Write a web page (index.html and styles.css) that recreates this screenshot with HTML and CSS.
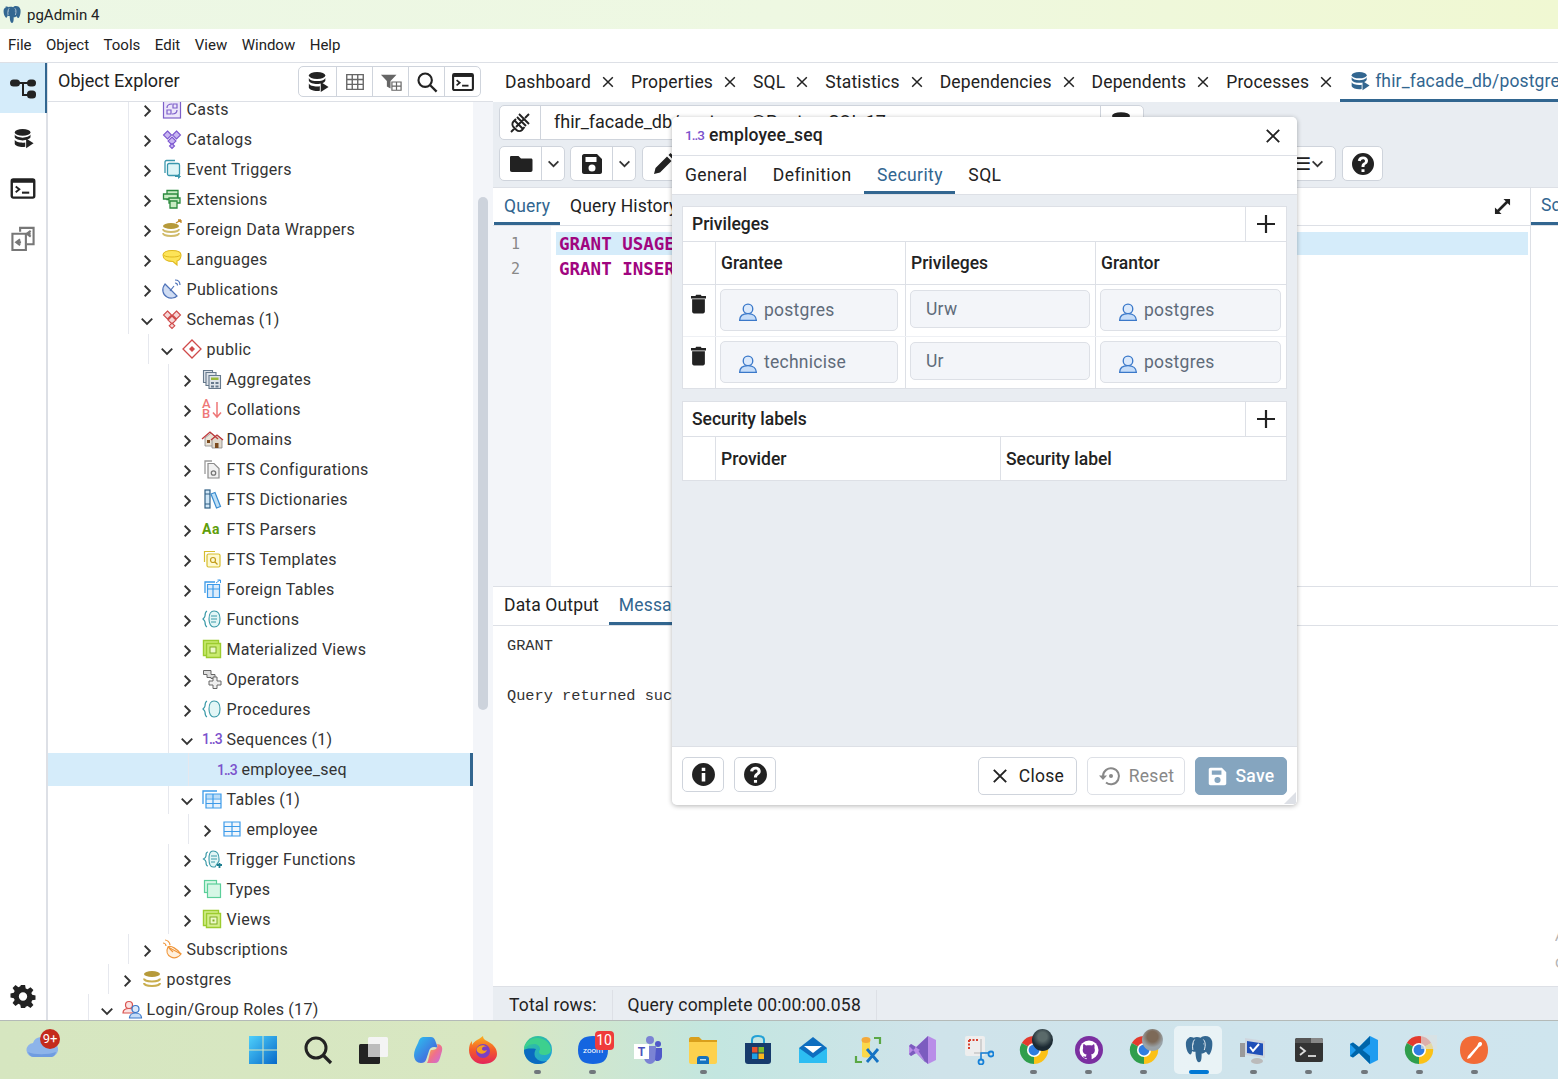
FILE: index.html
```html
<!DOCTYPE html>
<html lang="en">
<head>
  <meta charset="UTF-8">
  <title>pgAdmin 4</title>
  <link rel="stylesheet" href="styles.css">
</head>
<body>

<svg class="defs" width="0" height="0">
  <defs>
    <symbol id="i-close" viewBox="0 0 16 16"><path d="M2.500 2.500l11 11M13.500 2.500l-11 11" fill="none" stroke="currentColor" stroke-width="1.700"/></symbol>
    <symbol id="i-right" viewBox="0 0 12 12"><path d="M4 1.500L8.500 6 4 10.500" fill="none" stroke="#333" stroke-width="1.600"/></symbol>
    <symbol id="i-down" viewBox="0 0 12 12"><path d="M1.500 4L6 8.500 10.500 4" fill="none" stroke="#333" stroke-width="1.600"/></symbol>
    <symbol id="i-dbplay" viewBox="0 0 24 24"><g fill="currentColor"><ellipse cx="11" cy="5" rx="9" ry="3.800"/><path d="M2 7.500c1 2.300 5 3.500 9 3.500s8-1.200 9-3.500v3.200c-1 2.300-5 3.500-9 3.500s-8-1.200-9-3.500z"/><path d="M2 13.500c1 2.300 5 3.300 9 3.300 1 0 2 0 3-.2v4.900c-1 .2-2 .3-3 .3-4 0-8-1.300-9-3.500z"/><path d="M15 12l8.500 5.500L15 23z"/></g></symbol>
    <symbol id="i-grid" viewBox="0 0 24 24"><path d="M3 4h18v16H3zM3 9.300h18M3 14.600h18M9 4v16M15 4v16" fill="none" stroke="currentColor" stroke-width="1.500"/></symbol>
    <symbol id="i-filter" viewBox="0 0 24 24"><path d="M1 4h17l-6.500 7v8l-4-2v-6z" fill="currentColor"/><path d="M13 12h10v9H13zM13 16.500h10M18 12v9" fill="#fff" stroke="currentColor" stroke-width="1.300"/></symbol>
    <symbol id="i-search" viewBox="0 0 24 24"><circle cx="10" cy="10" r="7.300" fill="none" stroke="currentColor" stroke-width="2.300"/><path d="M15.500 15.500l7 7" stroke="currentColor" stroke-width="2.500"/></symbol>
    <symbol id="i-term" viewBox="0 0 24 24"><rect x="1.200" y="3.200" width="21.600" height="17.600" rx="1.500" fill="none" stroke="currentColor" stroke-width="2.300"/><rect x="1" y="3" width="22" height="3.500" fill="currentColor"/><path d="M5 10l3.500 2.800L5 15.600" fill="none" stroke="currentColor" stroke-width="1.800"/><path d="M11 16h7" stroke="currentColor" stroke-width="2"/></symbol>
    <symbol id="i-tree" viewBox="0 0 26 24"><g fill="currentColor"><rect x="0" y="3" width="10" height="7" rx="3.500"/><rect x="17" y="3" width="9" height="7" rx="3.500"/><rect x="17" y="14" width="9" height="8" rx="3.500"/><path d="M9 5.500h9v2h-4v10h4v2h-6v-12H9z"/></g></symbol>
    <symbol id="i-diff" viewBox="0 0 26 26"><g fill="none" stroke="currentColor" stroke-width="2.200"><path d="M10 6V2h14v17h-7"/><path d="M2 8h14v17H2z"/><path d="M21 5l-4 3 4 3M17 8h4M10 14l-4 3 4 3M6 17h5"/></g></symbol>
    <symbol id="i-gear" viewBox="0 0 24 24"><path fill="currentColor" fill-rule="evenodd" d="M10 1h4l.6 3.200 1.800.8L19.200 3l2.800 2.800-2 2.800.8 1.800 3.200.6v4l-3.200.6-.8 1.800 2 2.800-2.800 2.800-2.800-2-1.800.8L14 23h-4l-.6-3.200-1.800-.8-2.800 2L2 18.200l2-2.800-.8-1.800L0 13v-4l3.200-.6L4 6.600 2 3.800 4.800 1l2.800 2 1.800-.8zM12 8a4 4 0 1 0 0 8 4 4 0 0 0 0-8z"/></symbol>
    <symbol id="i-folder" viewBox="0 0 24 24"><path fill="currentColor" d="M2 4h7.500l2.500 2.500h10c1 0 1.500.6 1.500 1.500v10c0 1-.6 2-2 2H3c-1.400 0-2-1-2-2V5.500C1 4.600 1.400 4 2 4z"/></symbol>
    <symbol id="i-save" viewBox="0 0 24 24"><path fill="currentColor" fill-rule="evenodd" d="M4 2h13l5 5v13c0 1-1 2-2 2H4c-1 0-2-1-2-2V4c0-1 1-2 2-2zm1.500 3v5h11V5zM12 12.500a3.500 3.500 0 1 0 0 7 3.500 3.500 0 0 0 0-7z"/></symbol>
    <symbol id="i-pencil" viewBox="0 0 24 24"><path fill="currentColor" d="M2 22l1.500-6L15 4.500l4.500 4.500L8 20.500zM16.500 3l2-2L23 5.500l-2 2z"/></symbol>
    <symbol id="i-help" viewBox="0 0 24 24"><path fill="currentColor" fill-rule="evenodd" d="M12 1a11 11 0 1 0 0 22 11 11 0 0 0 0-22zm-1.500 16.200h3V20h-3zM12 4.500c3 0 5 1.700 5 4.300 0 2.100-1.300 3-2.500 3.800-.8.600-1 1-1 2.400h-3c0-2.300.7-3.300 2-4.200 1-.7 1.500-1.100 1.500-1.900 0-1-.8-1.600-2-1.600s-2 .7-2.200 1.900l-3-.4C7.200 6 9.200 4.500 12 4.500z"/></symbol>
    <symbol id="i-info" viewBox="0 0 24 24"><path fill="currentColor" fill-rule="evenodd" d="M12 1a11 11 0 1 0 0 22 11 11 0 0 0 0-22zm-1.700 4.500h3.400v3.200h-3.400zm0 5h3.400v8.300h-3.400z"/></symbol>
    <symbol id="i-trash" viewBox="0 0 16 20"><path fill="currentColor" d="M5.500 0h5l.8 1.500H16V4H0V1.500h4.700zM1.200 5h13.600v13c0 1.200-.8 2-2 2H3.200c-1.200 0-2-.8-2-2z"/></symbol>
    <symbol id="i-plus" viewBox="0 0 20 20"><path d="M10 1v18M1 10h18" stroke="currentColor" stroke-width="2.200"/></symbol>
    <symbol id="i-user" viewBox="0 0 18 18"><circle cx="9" cy="6.200" r="4.300" fill="#dbe9fb" stroke="#3a78c9" stroke-width="1.200"/><path d="M1.500 16.500c0-3.800 3-6 7.500-6s7.500 2.200 7.500 6z" fill="#c5dcf8" stroke="#3a78c9" stroke-width="1.200"/></symbol>
    <symbol id="i-expand" viewBox="0 0 18 18"><path fill="currentColor" d="M10 1h7v7l-2.500-2.500-9 9L8 17H1v-7l2.500 2.500 9-9z"/></symbol>
    <symbol id="i-plug" viewBox="0 0 24 24"><path d="M3 21l4-4M21 3l-4 4M9 6l9 9M6 9l9 9M8 8l-2.500 2.500c-1.500 1.500-1.500 4 0 5.500l3 3c1.500 1.500 4 1.500 5.500 0L16.500 16M16 8l-8 8M11 3l10 10" fill="none" stroke="currentColor" stroke-width="1.900"/></symbol>
    <symbol id="i-reset" viewBox="0 0 24 24"><path d="M5 12a8 8 0 1 1 3 6.500" fill="none" stroke="currentColor" stroke-width="2"/><path d="M1 11.500h8L5 16z" fill="currentColor"/><circle cx="13" cy="12" r="2" fill="currentColor"/></symbol>
    <symbol id="i-chrome" viewBox="0 0 32 32"><path fill="#e33b2e" d="M16 16L3 8.500A15 15 0 0 1 29 8.500z"/><path fill="#fbc116" d="M16 16l13-7.500A15 15 0 0 1 16 31z"/><path fill="#2f9e4c" d="M16 16v15A15 15 0 0 1 3 8.500z"/><circle cx="16" cy="16" r="7.500" fill="#fff"/><circle cx="16" cy="16" r="5.800" fill="#2f7de1"/></symbol>
    <symbol id="i-pg" viewBox="0 0 32 32"><path fill="#336791" d="M6 2C3 2 1 5 1 9c0 5 2 11 5 12 1 0 2-2 2-4 1 1 3 1 4 1 0 5 1 12 4 12 3 0 3-5 3-10 2 0 3-.5 5-2 2 3 3 4 4 3 2-2 4-9 3-15-1-4-4-6-8-6-2 0-4 1-5 2-3-1-6-1-8 0-1-.5-2-1-6-1z"/><path d="M11 4c-2 2-3 7-2 12M21 4c2 2 3 6 1 12M9 9h1M21 9h1" fill="none" stroke="#fff" stroke-width="1"/></symbol>
  </defs>
</svg>

<header class="titlebar">
  <svg class="title-logo"><use href="#i-pg"/></svg>
  <span>pgAdmin 4</span>
</header>

<nav class="menubar">
  <span>File</span><span>Object</span><span>Tools</span><span>Edit</span><span>View</span><span>Window</span><span>Help</span>
</nav>

<div class="app">
  <aside class="sidebar">
    <div class="side-btn active"><svg><use href="#i-tree"/></svg></div>
    <div class="side-btn db"><svg><use href="#i-dbplay"/></svg></div>
    <div class="side-btn"><svg><use href="#i-term"/></svg></div>
    <div class="side-btn muted"><svg><use href="#i-diff"/></svg></div>
    <div class="side-btn gear"><svg><use href="#i-gear"/></svg></div>
  </aside>

  <section class="explorer">
    <div class="explorer-head">
      <span class="explorer-title">Object Explorer</span>
      <div class="btn-group">
        <span><svg><use href="#i-dbplay"/></svg></span>
        <span class="dim"><svg><use href="#i-grid"/></svg></span>
        <span class="dim"><svg><use href="#i-filter"/></svg></span>
        <span><svg><use href="#i-search"/></svg></span>
        <span><svg><use href="#i-term"/></svg></span>
      </div>
    </div>
    <div class="tree-wrap">
      <div class="tree">
        <div class="row l2"><svg class="chev"><use href="#i-right"/></svg><svg class="ico" viewBox="0 0 20 20"><rect x="1.500" y="0" width="17" height="19" fill="#ece6fa" stroke="#7d5fc9" stroke-width="1.200"/><path d="M5 15v-4h4v4zM11 9V5h4v4zM5 9c0-3 2-4 5-4M15 11c0 3-2 4-5 4" fill="none" stroke="#7d5fc9" stroke-width="1.200"/></svg><span>Casts</span></div>
        <div class="row l2"><svg class="chev"><use href="#i-right"/></svg><svg class="ico" viewBox="0 0 20 20"><g fill="#c8b6f2" stroke="#7c57cf" stroke-width="1.100"><path d="M5.500 2l4 4-4 4-4-4zM14.500 2l4 4-4 4-4-4zM10 8l4 4-4 4-4-4z"/><path d="M10 14.500l2.500 2.500-2.500 2.500L7.500 17z"/></g></svg><span>Catalogs</span></div>
        <div class="row l2"><svg class="chev"><use href="#i-right"/></svg><svg class="ico" viewBox="0 0 20 20"><path d="M3 14V3a1.500 1.500 0 0 1 1.500-1.500H13" fill="none" stroke="#3a97ad" stroke-width="1.300"/><rect x="5.500" y="4.500" width="12" height="12" rx="1.500" fill="#def5f7" stroke="#3a97ad" stroke-width="1.300"/><path d="M13 17.500h5M16 15.500l2.500 2-2.500 2" fill="#3a97ad" stroke="#3a97ad"/></svg><span>Event Triggers</span></div>
        <div class="row l2"><svg class="chev"><use href="#i-right"/></svg><svg class="ico" viewBox="0 0 20 20"><g fill="#c9ecc4" stroke="#2b8a3e" stroke-width="1.300"><path d="M5 1.500h11v9H5z"/><path d="M1.500 5h14v5h-14z"/><path d="M7 9h11v5H7z"/><path d="M8 12h7v7H8z"/></g></svg><span>Extensions</span></div>
        <div class="row l2"><svg class="chev"><use href="#i-right"/></svg><svg class="ico" viewBox="0 0 20 20"><ellipse cx="9" cy="7" rx="8" ry="3" fill="#b69a3a"/><path d="M1 10c0 1.700 3.600 3 8 3s8-1.300 8-3M1 14c0 1.700 3.600 3 8 3s8-1.300 8-3" fill="none" stroke="#d0bb6a" stroke-width="1.800"/><path d="M14 4l5-3M19 1h-3M19 1v3" stroke="#c28b2c" stroke-width="1.300" fill="none"/></svg><span>Foreign Data Wrappers</span></div>
        <div class="row l2"><svg class="chev"><use href="#i-right"/></svg><svg class="ico" viewBox="0 0 20 20"><path d="M1 6c0-3 4-4.500 9-4.500S19 3 19 6c0 3-1 5-4 6v4l-4-3.500C5 12.500 1 10 1 6z" fill="#fde458" stroke="#e0b91f" stroke-width="1.100"/><path d="M2 6.500c2 2 14 2 16 0" fill="none" stroke="#e0b91f"/></svg><span>Languages</span></div>
        <div class="row l2"><svg class="chev"><use href="#i-right"/></svg><svg class="ico" viewBox="0 0 20 20"><path d="M3 5C-1 10 1 16 5 18c3.500 2 8 1 10-1z" fill="#cfdcf3" stroke="#4e72b8" stroke-width="1.200"/><path d="M8 12l4-5M13 1c3 0 5 2 5 5M13 4c1.500 0 2.500 1 2.500 2.500" fill="none" stroke="#4e72b8" stroke-width="1.200"/></svg><span>Publications</span></div>
        <div class="row l2"><svg class="chev"><use href="#i-down"/></svg><svg class="ico" viewBox="0 0 20 20"><g fill="#f6d5d5" stroke="#cf4a4a" stroke-width="1.100"><path d="M5.500 2l4 4-4 4-4-4zM14.500 2l4 4-4 4-4-4zM10 7l4 4-4 4-4-4z"/><path d="M10 14l2.800 2.800-2.800 2.700-2.800-2.700z"/></g></svg><span>Schemas<span class="count">(1)</span></span></div>
        <div class="row l3"><svg class="chev"><use href="#i-down"/></svg><svg class="ico" viewBox="0 0 20 20"><path d="M10 1l9 9-9 9-9-9z" fill="#fff" stroke="#cf4a4a" stroke-width="1.300"/><path d="M10 7l3 3-3 3-3-3z" fill="#cf4a4a"/></svg><span>public</span></div>
        <div class="row l4"><svg class="chev"><use href="#i-right"/></svg><svg class="ico" viewBox="0 0 20 20"><g fill="#dfe4ea" stroke="#66798c" stroke-width="1.100"><path d="M1.500 1.500h9v12h-9z"/><path d="M4 3.500h10v13H4z"/><path d="M7 6.500h11.500v13H7z"/></g><path d="M9 8.500h7.500v2.500H9z" fill="#9ab93c"/><path d="M9 13h3v2H9zM13.500 13h3v2h-3zM9 16.500h3v2H9zM13.500 16.500h3v2h-3z" fill="#66798c"/></svg><span>Aggregates</span></div>
        <div class="row l4"><svg class="chev"><use href="#i-right"/></svg><svg class="ico" viewBox="0 0 20 20"><text x="0" y="9" class="svg-ab">A</text><text x="0" y="19" class="svg-ab">B</text><path d="M15 3v15M11 13.500l4 4.500 4-4.500" fill="none" stroke="#ee7777" stroke-width="1.500"/></svg><span>Collations</span></div>
        <div class="row l4"><svg class="chev"><use href="#i-right"/></svg><svg class="ico" viewBox="0 0 20 20"><path d="M3 9l6-5 6 5v8H3z" fill="#e9e2d6" stroke="#888" stroke-width=".8"/><path d="M10 10l5-4 5 4v9H10z" fill="#dfd8cc" stroke="#888" stroke-width=".8"/><path d="M0 10l8-7 8 7M9 11l6-5 6 5" fill="none" stroke="#c0393b" stroke-width="1.300"/><path d="M13 14h3.500v5H13zM5 11h3v3H5z" fill="#7b4a1e"/></svg><span>Domains</span></div>
        <div class="row l4"><svg class="chev"><use href="#i-right"/></svg><svg class="ico" viewBox="0 0 20 20"><path d="M3 15V2h7" fill="none" stroke="#9a9a9a" stroke-width="1.300"/><path d="M6 4.500h6l5 5V19H6z" fill="#f1f1f1" stroke="#8c8c8c" stroke-width="1.200"/><circle cx="11.500" cy="14" r="2.200" fill="none" stroke="#777" stroke-width="1.300"/></svg><span>FTS Configurations</span></div>
        <div class="row l4"><svg class="chev"><use href="#i-right"/></svg><svg class="ico" viewBox="0 0 20 20"><rect x="3" y="1" width="5" height="18" fill="#cfe6f6" stroke="#2f5f85" stroke-width="1.200"/><path d="M3 5h5M3 15h5" stroke="#2f5f85"/><path d="M9 5l4-1.500 5.500 14-4 1.500z" fill="#bfe0f7" stroke="#3b8dd0" stroke-width="1.200"/></svg><span>FTS Dictionaries</span></div>
        <div class="row l4"><svg class="chev"><use href="#i-right"/></svg><span class="ico-text aa">Aa</span><span>FTS Parsers</span></div>
        <div class="row l4"><svg class="chev"><use href="#i-right"/></svg><svg class="ico" viewBox="0 0 20 20"><path d="M2.500 13V2.500H13" fill="none" stroke="#d6bd2e" stroke-width="1.200"/><rect x="5" y="5" width="13" height="13" rx="1.500" fill="#fdf9d0" stroke="#d6bd2e" stroke-width="1.200"/><circle cx="11" cy="11" r="2.500" fill="none" stroke="#c29a1a" stroke-width="1.200"/><path d="M13 13l2.500 2.500" stroke="#c29a1a" stroke-width="1.200"/></svg><span>FTS Templates</span></div>
        <div class="row l4"><svg class="chev"><use href="#i-right"/></svg><svg class="ico" viewBox="0 0 20 20"><path d="M3 14V3h10" fill="none" stroke="#3d9be9" stroke-width="1.300"/><path d="M5.500 5.500h12v13h-12zM5.500 10h12M11 5.500v13" fill="#dcecfb" stroke="#3d9be9" stroke-width="1.200"/><path d="M14 4l4-3M18.500 1h-3M18.500 1v3" fill="none" stroke="#3d9be9"/></svg><span>Foreign Tables</span></div>
        <div class="row l4"><svg class="chev"><use href="#i-right"/></svg><svg class="ico" viewBox="0 0 20 20"><path d="M5 2C3 3 3 5 3 7c0 1-1 2-2 3 1 1 2 2 2 3 0 2 0 4 2 5" fill="none" stroke="#3b9aa8" stroke-width="1.200"/><path d="M12 2c4 0 6 3 6 8s-2 8-6 8c-3 0-5-3-5-8s2-8 5-8z" fill="#e2f6f6" stroke="#3b9aa8" stroke-width="1.100"/><path d="M9 7h6M9 10h6M9 13h5" stroke="#3b9aa8"/></svg><span>Functions</span></div>
        <div class="row l4"><svg class="chev"><use href="#i-right"/></svg><svg class="ico" viewBox="0 0 20 20"><g fill="#c8ea6f" stroke="#9ccc2f" stroke-width="1.400"><path d="M1.500 1.500h15v15h-15z"/><path d="M4.500 4.500h14v14h-14z"/></g><rect x="8" y="8" width="6" height="6" fill="#ecf9c9" stroke="#7fab20"/></svg><span>Materialized Views</span></div>
        <div class="row l4"><svg class="chev"><use href="#i-right"/></svg><svg class="ico" viewBox="0 0 20 20"><path d="M5 1.500h4v4h4v4H9v-1H5V5.500H1.500v-4z" fill="#ddd" stroke="#666" stroke-width="1"/><path d="M11 8h4v4h4v4h-4v3.500h-4V16H7v-4h4z" fill="#eee" stroke="#666" stroke-width="1"/></svg><span>Operators</span></div>
        <div class="row l4"><svg class="chev"><use href="#i-right"/></svg><svg class="ico" viewBox="0 0 20 20"><path d="M5 2C3 3 3 5 3 7c0 1-1 2-2 3 1 1 2 2 2 3 0 2 0 4 2 5" fill="none" stroke="#3b9aa8" stroke-width="1.200"/><path d="M12 2c4 0 6 3 6 8s-2 8-6 8c-3 0-5-3-5-8s2-8 5-8z" fill="#e2f6f6" stroke="#3b9aa8" stroke-width="1.100"/></svg><span>Procedures</span></div>
        <div class="row l4"><svg class="chev"><use href="#i-down"/></svg><span class="ico-text seq">1..3</span><span>Sequences<span class="count">(1)</span></span></div>
        <div class="row l5 leaf selected"><span class="ico-text seq">1..3</span><span>employee_seq</span></div>
        <div class="row l4"><svg class="chev"><use href="#i-down"/></svg><svg class="ico" viewBox="0 0 20 20"><path d="M1 15V2h14" fill="none" stroke="#3d9be9" stroke-width="1.300"/><path d="M4 5h15v14H4zM4 10h15M4 14.500h15M11 5v14" fill="#e6f2fc" stroke="#3d9be9" stroke-width="1.200"/><path d="M4 5h15v4H4z" fill="#3d9be9" opacity=".25"/></svg><span>Tables<span class="count">(1)</span></span></div>
        <div class="row l5"><svg class="chev"><use href="#i-right"/></svg><svg class="ico" viewBox="0 0 20 20"><path d="M2 3h16v14H2zM2 7.500h16M2 12.500h16M10 3v14" fill="#f0f6fc" stroke="#3d9be9" stroke-width="1.200"/></svg><span>employee</span></div>
        <div class="row l4"><svg class="chev"><use href="#i-right"/></svg><svg class="ico" viewBox="0 0 20 20"><path d="M6 3C4 3 4 5 4 7c0 1-1 2-2.500 3C3 11 4 12 4 13c0 2 0 4 2 4" fill="none" stroke="#3b9aa8" stroke-width="1.200"/><path d="M11 2c4 0 6 3 6 8v2l-4 6h-2c-3 0-4-3-4-8s1-8 4-8z" fill="#e2f6f6" stroke="#3b9aa8" stroke-width="1.100"/><path d="M9 7h6M9 10h6M9 13h4" stroke="#3b9aa8"/><path d="M15 16h5M17.500 14v5" stroke="#1f7f91" stroke-width="1.800"/></svg><span>Trigger Functions</span></div>
        <div class="row l4"><svg class="chev"><use href="#i-right"/></svg><svg class="ico" viewBox="0 0 20 20"><rect x="2.500" y="1.500" width="12" height="12" fill="#d6f7e6" stroke="#5ccf9a" stroke-width="1.200"/><rect x="5.500" y="5" width="13" height="13.500" fill="#d6f7e6" stroke="#5ccf9a" stroke-width="1.200"/></svg><span>Types</span></div>
        <div class="row l4"><svg class="chev"><use href="#i-right"/></svg><svg class="ico" viewBox="0 0 20 20"><g fill="#d3ee8c" stroke="#9ccc2f" stroke-width="1.400"><path d="M1.500 1.500h15v15h-15z"/><path d="M4.500 4.500h14v14h-14z"/></g><rect x="8" y="8" width="7" height="7" fill="#ecf9c9" stroke="#7fab20"/><rect x="10.500" y="10.500" width="2" height="2" fill="#7fab20"/></svg><span>Views</span></div>
        <div class="row l2"><svg class="chev"><use href="#i-right"/></svg><svg class="ico" viewBox="0 0 20 20"><path d="M6 8c-2 4-1 8 3 10 4 2 8 0 10-3z" fill="#fff0dd" stroke="#f0963a" stroke-width="1.200"/><path d="M6 8c3-2 9 2 13 7M11 13l-4-4M1 4c1 0 3 1 3 3M3 1c2 0 5 2 5 5" fill="none" stroke="#f0963a" stroke-width="1.200"/></svg><span>Subscriptions</span></div>
        <div class="row l1"><svg class="chev"><use href="#i-right"/></svg><svg class="ico" viewBox="0 0 20 20"><ellipse cx="10" cy="5" rx="8" ry="3" fill="#b69a3a"/><path d="M2 9.500c0 1.700 3.600 3 8 3s8-1.300 8-3M2 14c0 1.700 3.600 3 8 3s8-1.300 8-3" fill="none" stroke="#c9ae4f" stroke-width="2"/></svg><span>postgres</span></div>
        <div class="row l0"><svg class="chev"><use href="#i-down"/></svg><svg class="ico" viewBox="0 0 20 20"><circle cx="7" cy="6" r="3.500" fill="#fbe3e3" stroke="#d9534f" stroke-width="1.200"/><path d="M1 14c0-3 2.500-4.500 6-4.500s6 1.500 6 4.500z" fill="#fbe3e3" stroke="#d9534f" stroke-width="1.200"/><circle cx="13.500" cy="10" r="3.500" fill="#dbe9fb" stroke="#3a78c9" stroke-width="1.200"/><path d="M7.500 19c0-3 2.500-5 6-5s6 2 6 5z" fill="#c5dcf8" stroke="#3a78c9" stroke-width="1.200"/></svg><span>Login/Group Roles<span class="count">(17)</span></span></div>
      </div>
      <div class="tree-scroll"><div class="thumb"></div></div>
    </div>
  </section>

  <main class="main">
    <div class="tabs">
      <span class="tab">Dashboard<svg><use href="#i-close"/></svg></span>
      <span class="tab">Properties<svg><use href="#i-close"/></svg></span>
      <span class="tab">SQL<svg><use href="#i-close"/></svg></span>
      <span class="tab">Statistics<svg><use href="#i-close"/></svg></span>
      <span class="tab">Dependencies<svg><use href="#i-close"/></svg></span>
      <span class="tab">Dependents<svg><use href="#i-close"/></svg></span>
      <span class="tab">Processes<svg><use href="#i-close"/></svg></span>
      <span class="tab active"><svg class="tab-db"><use href="#i-dbplay"/></svg>fhir_facade_db/postgres@PostgreSQL 17</span>
    </div>

    <div class="connbar">
      <div class="conn-box">
        <span class="conn-plug"><svg><use href="#i-plug"/></svg></span>
        <span class="conn-name">fhir_facade_db/postgres@PostgreSQL 17</span>
        <span class="conn-db"><svg><use href="#i-dbplay"/></svg></span>
      </div>
    </div>

    <div class="toolbar">
      <div class="tb-group"><span class="tb-btn"><svg><use href="#i-folder"/></svg></span><span class="tb-arrow"><svg><use href="#i-down"/></svg></span></div>
      <div class="tb-group"><span class="tb-btn"><svg><use href="#i-save"/></svg></span><span class="tb-arrow"><svg><use href="#i-down"/></svg></span></div>
      <div class="tb-group tb-wide"><span class="tb-btn"><svg><use href="#i-pencil"/></svg></span><span class="tb-lines">&#9776;<svg><use href="#i-down"/></svg></span></div>
      <div class="tb-group tb-last"><span class="tb-btn"><svg><use href="#i-help"/></svg></span></div>
    </div>

    <div class="editor-area">
      <div class="query-pane">
        <div class="subtabs">
          <span class="subtab active">Query</span>
          <span class="subtab">Query History</span>
          <svg class="expand"><use href="#i-expand"/></svg>
        </div>
        <div class="editor">
          <div class="gutter"><div>1</div><div>2</div></div>
          <div class="code">
            <div class="code-line current"><b>GRANT USAGE</b></div>
            <div class="code-line"><b>GRANT INSERT</b></div>
          </div>
        </div>
      </div>
      <div class="side-pane"><span class="side-tab">Scratch Pad</span></div>
    </div>

    <div class="output">
      <div class="subtabs">
        <span class="subtab">Data Output</span>
        <span class="subtab active">Messages</span>
      </div>
      <pre class="messages">GRANT

Query returned successfully in 58 msec.</pre>
      <div class="watermark">Activate Windows<br>Go to Settings</div>
    </div>

    <div class="statusbar">
      <span>Total rows:</span>
      <span>Query complete 00:00:00.058</span>
    </div>
  </main>
</div>

<div class="dialog">
  <div class="dlg-title">
    <span class="ico-text seq small">1..3</span>
    <span class="dlg-name">employee_seq</span>
    <svg class="dlg-x"><use href="#i-close"/></svg>
  </div>
  <div class="dlg-tabs">
    <span>General</span><span>Definition</span><span class="current">Security</span><span>SQL</span>
  </div>
  <div class="dlg-body">
    <div class="panel">
      <div class="panel-head"><span>Privileges</span><span class="add"><svg><use href="#i-plus"/></svg></span></div>
      <div class="grid-row heads priv-cols"><div></div><div>Grantee</div><div>Privileges</div><div>Grantor</div></div>
      <div class="grid-row priv-cols">
        <div class="del"><svg><use href="#i-trash"/></svg></div>
        <div><div class="field"><svg><use href="#i-user"/></svg>postgres</div></div>
        <div><div class="field plain">Urw</div></div>
        <div><div class="field"><svg><use href="#i-user"/></svg>postgres</div></div>
      </div>
      <div class="grid-row priv-cols">
        <div class="del"><svg><use href="#i-trash"/></svg></div>
        <div><div class="field"><svg><use href="#i-user"/></svg>technicise</div></div>
        <div><div class="field plain">Ur</div></div>
        <div><div class="field"><svg><use href="#i-user"/></svg>postgres</div></div>
      </div>
    </div>
    <div class="panel">
      <div class="panel-head"><span>Security labels</span><span class="add"><svg><use href="#i-plus"/></svg></span></div>
      <div class="grid-row heads label-cols"><div></div><div>Provider</div><div>Security label</div></div>
    </div>
  </div>
  <div class="dlg-foot">
    <span class="foot-icon"><svg><use href="#i-info"/></svg></span>
    <span class="foot-icon"><svg><use href="#i-help"/></svg></span>
    <span class="foot-space"></span>
    <span class="foot-btn close"><svg><use href="#i-close"/></svg>Close</span>
    <span class="foot-btn disabled"><svg><use href="#i-reset"/></svg>Reset</span>
    <span class="foot-btn save"><svg><use href="#i-save"/></svg>Save</span>
  </div>
  <div class="grip"></div>
</div>

<footer class="taskbar">
  <div class="weather">
    <svg viewBox="0 0 32 22" width="32" height="22"><path d="M8 21a7 7 0 0 1-1-14 9 9 0 0 1 16-2 7 7 0 0 1 2 16z" fill="#8db4ea"/><path d="M2 16c6 3 20 3 28 0-1 4-3 5-5 5H8c-3 0-5-2-6-5z" fill="#6f9ce0"/></svg>
    <span class="badge red-round">9+</span>
  </div>
  <div class="apps">
    <span class="app-icon"><svg viewBox="0 0 30 30"><defs><linearGradient id="win" x1="0" y1="0" x2="1" y2="1"><stop offset="0" stop-color="#4fd0fb"/><stop offset="1" stop-color="#0769c9"/></linearGradient></defs><path fill="url(#win)" d="M1 1h13.500v13.500H1zM15.500 1H29v13.500H15.500zM1 15.500h13.500V29H1zM15.500 15.500H29V29H15.500z"/></svg></span>
    <span class="app-icon"><svg viewBox="0 0 30 30"><circle cx="13" cy="13" r="10" fill="none" stroke="#222" stroke-width="3"/><path d="M20 20l8 8" stroke="#222" stroke-width="3.200"/></svg></span>
    <span class="app-icon"><svg viewBox="0 0 30 30"><rect x="10" y="2" width="20" height="20" rx="1.500" fill="#f4f4f4"/><rect x="1" y="9" width="21" height="20" rx="1.500" fill="#222"/><rect x="10" y="9" width="12" height="13" fill="#bdbdbd"/></svg></span>
    <span class="app-icon"><svg viewBox="0 0 30 30"><defs><linearGradient id="cop1" x1="0" y1="0" x2="1" y2="1"><stop offset="0" stop-color="#2cc6f0"/><stop offset=".6" stop-color="#3f7be0"/><stop offset="1" stop-color="#7d4de0"/></linearGradient><linearGradient id="cop2" x1="0" y1="0" x2="1" y2="1"><stop offset="0" stop-color="#f7c531"/><stop offset=".5" stop-color="#f0708a"/><stop offset="1" stop-color="#c46ce8"/></linearGradient></defs><path fill="url(#cop1)" d="M10 2h8c2 0 3 1 4 3l3 8c-4-2-8-1-9 3l-3 9c-1 2-2 3-5 3-4 0-7-3-7-8 0-4 2-8 4-12 1-4 3-6 5-6z"/><path fill="url(#cop2)" d="M14 28h8c3 0 4-2 5-5l2-7c1-4-1-7-5-7 2 5-3 6-6 6-2 3-2 10-4 13z"/></svg></span>
    <span class="app-icon"><svg viewBox="0 0 30 30"><defs><linearGradient id="fox" x1="0" y1="0" x2="0" y2="1"><stop offset="0" stop-color="#fbb11e"/><stop offset=".5" stop-color="#f45b2a"/><stop offset="1" stop-color="#e3245c"/></linearGradient></defs><path fill="url(#fox)" d="M15 29C7 29 1 23 1 15c0-4 1-7 3-9v4c1-2 3-4 5-5 3-1 4-3 6-4 0 3 2 4 4 5 6 3 10 7 10 13 0 6-6 10-14 10z"/><circle cx="15" cy="16" r="7" fill="#7c3fc4"/><path d="M9 13c2-3 7-4 10-1-3-1-5 0-5 2 0 2 3 2 5 1-1 3-5 5-8 3-2-1-3-3-2-5z" fill="#f7a01e"/></svg></span>
    <span class="app-icon running"><svg viewBox="0 0 30 30"><defs><linearGradient id="edge" x1="0" y1="0" x2="1" y2="1"><stop offset="0" stop-color="#37c98c"/><stop offset="1" stop-color="#1b9de2"/></linearGradient></defs><circle cx="15" cy="15" r="14" fill="url(#edge)"/><path d="M1 15C1 8 7 3 14 3c8 0 14 5 14 12 0 3-3 5-7 5-3 0-5-1-5-3 0-1 1-2 1-3 0-3-3-5-6-5-5 0-9 3-10 6z" fill="#3dd08e"/><path d="M1 15c0 8 6 14 14 14 4 0 7-1 9-3-4 1-9 0-11-3-2-2-2-6 0-9-6-1-11 0-12 1z" fill="#0a6bc0"/></svg></span>
    <span class="app-icon running"><svg viewBox="0 0 30 30"><path d="M15 1c9 0 15 3 15 14s-6 14-15 14S0 26 0 15 6 1 15 1z" fill="#1565e0"/><text x="15" y="18" class="svg-zoom">zoom</text></svg><span class="badge red-square">10</span></span>
    <span class="app-icon"><svg viewBox="0 0 30 30"><circle cx="17" cy="5" r="4" fill="#7b83d4"/><circle cx="25" cy="9" r="3" fill="#5059c9"/><path d="M11 11h12v11c0 4-3 7-6 7s-6-3-6-7z" fill="#7b83d4"/><path d="M23 13h6v8c0 3-2 5-5 5-1 0-1 0-2-1z" fill="#5059c9"/><rect x="1" y="9" width="15" height="15" fill="#fff"/><text x="8.500" y="21" class="svg-t">T</text></svg></span>
    <span class="app-icon running"><svg viewBox="0 0 30 30"><path d="M1 4c0-1 1-2 2-2h8l3 3h15v3H1z" fill="#d99f1c"/><path d="M1 7h28v20c0 1-1 2-2 2H3c-1 0-2-1-2-2z" fill="#fdd14e"/><path d="M9 24c0-2 1-3 3-3h6c2 0 3 1 3 3v5H9z" fill="#1672bf"/><rect x="12" y="24" width="6" height="1.500" fill="#bfe0f7"/></svg></span>
    <span class="app-icon"><svg viewBox="0 0 30 30"><path d="M2 8h26v18c0 2-1 3-3 3H5c-2 0-3-1-3-3z" fill="#173b6c"/><path d="M9 8V5c0-2 2-4 6-4s6 2 6 4v3" fill="none" stroke="#22a1d6" stroke-width="2"/><path d="M9 12h5.500v5.500H9z" fill="#e8522d"/><path d="M15.500 12H21v5.500h-5.500z" fill="#7cbb2b"/><path d="M9 18.500h5.500V24H9z" fill="#1fa0e5"/><path d="M15.500 18.500H21V24h-5.500z" fill="#fbb81e"/></svg></span>
    <span class="app-icon"><svg viewBox="0 0 30 30"><path d="M15 2l14 11v15H1V13z" fill="#0f6ebf"/><path d="M1 13l14 10 14-10v15H1z" fill="#2dbdf2"/><path d="M6 11h18l-9 7z" fill="#fff"/></svg></span>
    <span class="app-icon"><svg viewBox="0 0 30 30"><path d="M9 5c0-2 8-2 8 0v16c0 2-8 2-8 0z" fill="#fbd84a"/><ellipse cx="13" cy="5" rx="4.500" ry="3" fill="#f4a93a"/><path d="M21 3h6v6M3 21v6h6" fill="none" stroke="#5aa845" stroke-width="2.200"/><path d="M14 14l11 13M25 14L14 27" stroke="#1573c4" stroke-width="2.800"/></svg></span>
    <span class="app-icon"><svg viewBox="0 0 30 30"><path d="M20 1l8 4v20l-8 4-12-11-5 3-2-2V11l2-2 5 3z" fill="#b98de8"/><path d="M20 1v28L8 18l-5 3-2-2 18-17zM8 12l-5-3-2 2 17 17" fill="#7c5cbf"/><path d="M7 12v6l5-3z" fill="#b98de8"/></svg></span>
    <span class="app-icon"><svg viewBox="0 0 30 30"><rect x="1" y="1" width="20" height="20" rx="2" fill="#eee"/><path d="M5 5h9M5 5v9" stroke="#d9402e" stroke-width="2" stroke-dasharray="2 1.500"/><path d="M17 4v20M27 18H10" stroke="#c8c8c8" stroke-width="1.500"/><circle cx="17" cy="27" r="2.500" fill="none" stroke="#1781d8" stroke-width="1.800"/><circle cx="27" cy="19" r="2.500" fill="none" stroke="#1781d8" stroke-width="1.800"/><path d="M17 24v-6h8" fill="none" stroke="#1781d8" stroke-width="1.500"/></svg></span>
    <span class="app-icon running"><svg viewBox="0 0 32 32"><use href="#i-chrome"/></svg><span class="avatar dark"></span></span>
    <span class="app-icon running"><svg viewBox="0 0 30 30"><circle cx="15" cy="15" r="14" fill="#7b2fa0"/><circle cx="15" cy="15" r="9.500" fill="#fff"/><path d="M10 9l2 1.500c2-.5 4-.5 6 0L20 9c.7 2 .7 3 .4 4 1.200 3 0 6-3.400 6.500.5.500.6 1 .6 2V25h-5v-2c-2 .5-3-.5-3.500-2 1 .2 2 1 3 .8 0-.8 0-1.300.5-2.300-3.400-.5-4.600-3.500-3.400-6.500-.3-1 -.3-2 .3-4z" fill="#7b2fa0"/></svg></span>
    <span class="app-icon running"><svg viewBox="0 0 32 32"><use href="#i-chrome"/></svg><span class="avatar light"></span></span>
    <span class="app-icon running open"><svg class="pg-big"><use href="#i-pg"/></svg></span>
    <span class="app-icon running"><svg viewBox="0 0 30 30"><rect x="1" y="8" width="5" height="14" fill="#9a9a9a"/><path d="M6 3l20 3v17L6 20z" fill="#cfd6de"/><path d="M8 6l16 2.500v12L8 18z" fill="#1f4fb8"/><path d="M11 12l3 4 6-7" fill="none" stroke="#fff" stroke-width="2"/><ellipse cx="18" cy="26" rx="6" ry="3" fill="#bbb"/></svg></span>
    <span class="app-icon running"><svg viewBox="0 0 30 30"><rect x="1" y="3" width="28" height="24" rx="2" fill="#333"/><path d="M1 5c0-1 1-2 2-2h14v5H1z" fill="#555"/><path d="M17 3h10c1 0 2 1 2 2v3H17z" fill="#888"/><path d="M6 12l5 4-5 4" fill="none" stroke="#ddd" stroke-width="1.800"/><path d="M14 21h8" stroke="#ddd" stroke-width="1.800"/></svg></span>
    <span class="app-icon running"><svg viewBox="0 0 30 30"><path d="M21 1l8 4v20l-8 4-11-11-6 4.500L1 21V9l3-1.500L10 12z" fill="#1f9cf0"/><path d="M21 1v28L10 18l-6 4.500L1 21l6-6-6-6 3-1.500L10 12z" fill="#0065a9"/><path d="M21 9v12l-7.500-6z" fill="#1f9cf0"/></svg></span>
    <span class="app-icon running"><svg viewBox="0 0 32 32"><use href="#i-chrome"/></svg><span class="shade"></span></span>
    <span class="app-icon running"><svg viewBox="0 0 30 30"><path d="M15 1c9 0 14 5 14 14s-5 14-14 14S1 24 1 15 6 1 15 1z" fill="#f26b36"/><path d="M8 24l3-1 9-11 2-1c2-2 1-4-1-4-1 0-2 1-2 2l-1 2-9 10z" fill="#fff"/></svg></span>
  </div>
</footer>

</body>
</html>
```

FILE: styles.css
```css
* {
  box-sizing: border-box;
}

html, body {
  margin: 0;
  height: 100%;
}

body {
  position: relative;
  width: 1558px;
  height: 1079px;
  overflow: hidden;
  display: flex;
  flex-direction: column;
  font-family: Roboto, "Liberation Sans", sans-serif;
  font-size: 16px;
  color: #222;
  background: #fff;
}

svg {
  display: block;
}

.defs {
  position: absolute;
}

/* window chrome */
.titlebar {
  height: 29px;
  display: flex;
  align-items: center;
  gap: 6px;
  padding-left: 3px;
  font-size: 15px;
  background: linear-gradient(90deg, #ecf7e5 0%, #eef8e2 50%, #f0f8d2 100%);
}

.title-logo {
  width: 18px;
  height: 20px;
}

.menubar {
  height: 34px;
  display: flex;
  align-items: center;
  gap: 14.500px;
  padding: 0 0 2px 8px;
  font-size: 15px;
  background: #fff;
  border-bottom: 1px solid #dde0e6;
}

.app {
  flex: 1;
  min-height: 0;
  display: flex;
}

/* left icon strip */
.sidebar {
  width: 48px;
  display: flex;
  flex-direction: column;
  border-right: 2px solid #dde0e6;
}

.side-btn {
  height: 50px;
  display: flex;
  align-items: center;
  justify-content: center;
  color: #222;
}

.side-btn svg {
  width: 26px;
  height: 25px;
}

.side-btn.db svg {
  width: 21px;
  height: 21px;
}

.side-btn.active {
  background: #d5ecfa;
  border-right: 2px solid #326690;
  margin-right: -1px;
}

.side-btn.muted {
  color: #777;
}

.side-btn.gear {
  margin-top: auto;
  margin-bottom: -1px;
}

/* object explorer */
.explorer {
  width: 445px;
  display: flex;
  flex-direction: column;
}

.explorer-head {
  height: 39px;
  display: flex;
  align-items: center;
  justify-content: space-between;
  padding: 0 12px 1px 10px;
  border-bottom: 1px solid #dde0e6;
}

.explorer-title {
  font-size: 18px;
  margin-bottom: 2px;
}

.btn-group {
  display: flex;
  border: 1px solid #cfd4dc;
  border-radius: 5px;
}

.btn-group span {
  width: 36px;
  height: 29px;
  display: flex;
  align-items: center;
  justify-content: center;
  color: #222;
  border-left: 1px solid #cfd4dc;
}

.btn-group span:first-child {
  width: 37px;
  border-left: 0;
}

.btn-group span.dim {
  color: #666;
}

.btn-group svg {
  width: 22px;
  height: 22px;
}

.tree-wrap {
  flex: 1;
  min-height: 0;
  display: flex;
}

.tree {
  width: 425px;
  overflow: hidden;
}

.tree-scroll {
  width: 20px;
  background: #f3f5f9;
  padding: 95px 4px 0 5px;
}

.thumb {
  width: 10px;
  height: 513px;
  border-radius: 5px;
  background: #cdd3dc;
}

.row {
  height: 30px;
  display: flex;
  align-items: center;
  font-size: 16px;
  letter-spacing: .3px;
  color: #333;
}

.row:first-child {
  margin-top: -8px;
}

.row::before {
  content: "";
  align-self: stretch;
  width: 1px;
  background: #e6e8ee;
  margin-right: 8px;
}

.l0::before { margin-left: 40px; }
.l1::before { margin-left: 60px; }
.l2::before { margin-left: 80px; }
.l3::before { margin-left: 100px; }
.l4::before { margin-left: 120px; }
.l5::before { margin-left: 140px; }

.chev {
  width: 20px;
  height: 14px;
  flex: none;
  margin-top: 4px;
}

.ico {
  width: 20px;
  height: 20px;
  flex: none;
  margin: 0 4.500px 0 5px;
  overflow: visible;
}

.ico-text {
  flex: none;
  width: 20px;
  margin: 0 4.500px 0 5px;
  white-space: nowrap;
}

.aa {
  font-weight: 700;
  font-size: 14px;
  color: #5f9e0b;
  letter-spacing: .5px;
}

.seq {
  color: #7b52cc;
  font-size: 14px;
  font-weight: 500;
  letter-spacing: -1px;
}

.count {
  margin-left: 4px;
}

.selected {
  height: 33px;
  margin: -1px 0 -2px;
  background: #d5ecfa;
  border-right: 3px solid #326690;
  position: relative;
}

.leaf::before {
  margin-right: 23px;
}

/* main area */
.main {
  flex: 1;
  min-width: 0;
  position: relative;
  display: flex;
  flex-direction: column;
  background: #e9edf2;
}

.tabs {
  height: 39px;
  display: flex;
  background: #fff;
  padding-left: 3px;
  overflow: hidden;
  white-space: nowrap;
}

.tab {
  display: flex;
  align-items: center;
  gap: 10px;
  padding: 0 7px 2px 9px;
  font-size: 17.500px;
  letter-spacing: .15px;
  flex: none;
  color: #222;
}

.tab svg {
  width: 14px;
  height: 14px;
}

.tab.active {
  color: #326690;
  gap: 5px;
  padding: 0 0 0 10px;
  border-bottom: 3px solid #326690;
}

.tab svg.tab-db {
  width: 20px;
  height: 20px;
  color: #326690;
}

.connbar {
  height: 44px;
  padding: 3px 0 0 6px;
}

.conn-box {
  width: 645px;
  height: 35px;
  display: flex;
  align-items: center;
  background: #fff;
  border: 1px solid #cfd4dc;
  border-radius: 5px;
  font-size: 18px;
}

.conn-plug {
  width: 41px;
  height: 100%;
  display: flex;
  align-items: center;
  justify-content: center;
  border-right: 1px solid #cfd4dc;
}

.conn-plug svg, .conn-db svg {
  width: 24px;
  height: 24px;
}

.conn-name {
  flex: 1;
  padding: 0 0 2px 13px;
}

.conn-db {
  width: 43px;
  height: 100%;
  display: flex;
  align-items: center;
  justify-content: center;
  border-left: 1px solid #cfd4dc;
}

.toolbar {
  height: 41px;
  display: flex;
  gap: 5px;
  padding-left: 6px;
}

.tb-group {
  height: 35px;
  display: flex;
  background: #fff;
  border: 1px solid #cfd4dc;
  border-radius: 5px;
}

.tb-wide {
  width: 694px;
  margin-left: 1px;
  justify-content: space-between;
}

.tb-last {
  margin-left: 1px;
}

.tb-btn {
  width: 41px;
  display: flex;
  align-items: center;
  justify-content: center;
}

.tb-last .tb-btn {
  width: 39px;
}

.tb-btn svg {
  width: 24px;
  height: 24px;
}

.tb-arrow {
  width: 23px;
  display: flex;
  align-items: center;
  justify-content: center;
  border-left: 1px solid #cfd4dc;
}

.tb-arrow svg {
  width: 13px;
  height: 13px;
}

.tb-lines {
  width: 40px;
  display: flex;
  align-items: center;
  font-size: 18px;
}

.tb-lines svg {
  width: 13px;
  height: 13px;
}

.editor-area {
  height: 400px;
  display: flex;
  background: #fff;
  border-top: 1px solid #dde0e6;
  border-bottom: 1px solid #dde0e6;
}

.query-pane {
  flex: 1;
  min-width: 0;
  border-right: 1px solid #dde0e6;
}

.subtabs {
  height: 38px;
  display: flex;
  align-items: stretch;
  padding-left: 1px;
  border-bottom: 1px solid #dde0e6;
  font-size: 17.500px;
  letter-spacing: .15px;
}

.subtab {
  display: flex;
  align-items: center;
  padding: 0 10px 2px;
  color: #222;
  white-space: nowrap;
}

.subtab.active {
  color: #326690;
  box-shadow: inset 0 -3px #326690;
}

.expand {
  width: 17px;
  height: 17px;
  margin: auto 19px auto auto;
  color: #222;
}

.editor {
  height: 360px;
  display: flex;
}

.gutter {
  width: 58px;
  background: #f3f5f9;
  padding: 6px 31px 0 0;
  text-align: right;
  font-family: "DejaVu Sans Mono", monospace;
  font-size: 15px;
  line-height: 25px;
  color: #888;
}

.code {
  flex: 1;
  padding: 6px 2px 0 5px;
  font-family: "DejaVu Sans Mono", monospace;
  font-size: 17.500px;
  line-height: 25px;
  white-space: nowrap;
}

.code-line {
  height: 25px;
  padding-left: 3px;
}

.code-line b {
  color: #a0057f;
}

.code-line.current {
  height: 23px;
  margin-bottom: 2px;
  background: #d5ecfa;
}

.side-pane {
  width: 27px;
  overflow: hidden;
  white-space: nowrap;
}

.side-tab {
  display: block;
  height: 38px;
  line-height: 35px;
  font-size: 17.500px;
  padding-left: 10px;
  color: #326690;
  box-shadow: inset 0 -3px #326690;
  border-bottom: 1px solid #dde0e6;
}

.output {
  flex: 1;
  min-height: 0;
  position: relative;
  background: #fff;
}

.output .subtabs {
  height: 39px;
}

.messages {
  margin: 0;
  padding: 8px 14px;
  font-family: "Liberation Mono", monospace;
  font-size: 15.300px;
  line-height: 25px;
  color: #333;
}

.watermark {
  position: absolute;
  right: 0;
  top: 335px;
  width: 3px;
  overflow: hidden;
  font-family: "Liberation Sans", sans-serif;
  font-size: 15px;
  line-height: 27px;
  white-space: nowrap;
  color: #b5b5b5;
}

.statusbar {
  height: 34px;
  display: flex;
  align-items: center;
  border-top: 1px solid #dde0e6;
  font-size: 17.500px;
  letter-spacing: .18px;
}

.statusbar span {
  height: 30px;
  margin-top: 3px;
  display: flex;
  align-items: center;
  padding: 0 15px 0 16px;
  border-right: 1px solid #dde0e6;
}

.statusbar span:last-child {
  padding-left: 15px;
}

/* dialog */
.dialog {
  position: absolute;
  left: 672px;
  top: 117px;
  width: 625px;
  height: 688px;
  display: flex;
  flex-direction: column;
  background: #e9edf2;
  border-radius: 5px;
  box-shadow: 0 1px 5px rgba(0, 0, 0, .3);
  overflow: hidden;
}

.dlg-title {
  height: 39px;
  flex: none;
  display: flex;
  align-items: center;
  padding: 0 15px 2px 13px;
  background: #fff;
  border-bottom: 1px solid #dde0e6;
}

.ico-text.small {
  margin: 0 4px 0 0;
  font-size: 13.500px;
}

.dlg-name {
  flex: 1;
  font-size: 17.500px;
  font-weight: 500;
  letter-spacing: .15px;
}

.dlg-x {
  width: 18px;
  height: 18px;
  margin-top: 2px;
  color: #222;
}

.dlg-tabs {
  height: 39px;
  flex: none;
  display: flex;
  align-items: stretch;
  background: #fff;
  border-bottom: 1px solid #dde0e6;
  font-size: 17.500px;
  letter-spacing: .4px;
}

.dlg-tabs span {
  display: flex;
  align-items: center;
  padding: 0 12.500px 0 13px;
}

.dlg-tabs .current {
  color: #326690;
  box-shadow: inset 0 -3px #326690;
}

.dlg-body {
  flex: 1;
  padding: 11px 10px 0;
  display: flex;
  flex-direction: column;
  gap: 12px;
}

.panel {
  background: #fff;
  border: 1px solid #dde0e6;
}

.panel-head {
  height: 35px;
  display: flex;
  align-items: center;
  justify-content: space-between;
  padding-left: 9px;
  font-size: 17.500px;
  font-weight: 500;
  border-bottom: 1px solid #dde0e6;
}

.add {
  width: 41px;
  height: 100%;
  display: flex;
  align-items: center;
  justify-content: center;
  border-left: 1px solid #dde0e6;
}

.add svg {
  width: 20px;
  height: 20px;
}

.grid-row {
  display: grid;
  border-bottom: 1px solid #eef0f4;
}

.priv-cols {
  grid-template-columns: 32px 190px 190px 1fr;
}

.label-cols {
  grid-template-columns: 32px 285px 1fr;
}

.grid-row > div {
  border-left: 1px solid #dde0e6;
}

.grid-row > div:first-child {
  border-left: 0;
}

.heads {
  height: 43px;
  align-items: stretch;
  border-bottom: 1px solid #dde0e6;
}

.heads > div {
  display: flex;
  align-items: center;
  padding-left: 5px;
  font-size: 17.500px;
  font-weight: 500;
}

.grid-row:last-child {
  border-bottom: 0;
}

.priv-cols:not(.heads) > div:not(.del) {
  padding: 4px 5px 4px 4px;
  height: 51px;
}

.priv-cols:not(.heads) > div:nth-child(2) {
  padding-right: 7px;
}

.del {
  padding: 9px 0 0 8px;
}

.del svg {
  width: 15px;
  height: 20px;
}

.field {
  height: 42px;
  display: flex;
  align-items: center;
  gap: 6px;
  padding-left: 17px;
  background: #f3f5f9;
  border: 1px solid #dde0e6;
  border-radius: 5px;
  font-size: 17.500px;
  letter-spacing: .25px;
  color: #5f6b7a;
}

.field svg {
  width: 20px;
  height: 20px;
  margin-top: 3px;
}

.field.plain {
  height: 38px;
  margin-top: 1px;
  padding-left: 15px;
}

.dlg-foot {
  height: 59px;
  flex: none;
  display: flex;
  align-items: flex-start;
  gap: 10px;
  padding: 10px 10px 0;
  background: #fff;
  border-top: 1px solid #dde0e6;
}

.foot-icon {
  width: 42px;
  height: 35px;
  display: flex;
  align-items: center;
  justify-content: center;
  border: 1px solid #cfd4dc;
  border-radius: 5px;
}

.foot-icon svg {
  width: 25px;
  height: 25px;
}

.foot-space {
  flex: 1;
}

.foot-btn {
  height: 38px;
  display: flex;
  align-items: center;
  justify-content: center;
  gap: 10px;
  border: 1px solid #cfd4dc;
  border-radius: 5px;
  font-size: 17.500px;
  letter-spacing: .3px;
}

.foot-btn svg {
  width: 18px;
  height: 18px;
}

.foot-btn.close {
  width: 99px;
}

.foot-btn.disabled {
  width: 98px;
  gap: 7px;
  color: #888;
  border-color: #dde0e6;
}

.foot-btn.disabled svg {
  width: 24px;
  height: 24px;
}

.foot-btn.save {
  width: 92px;
  gap: 7px;
  background: #85a5bf;
  border-color: #85a5bf;
  color: #fff;
  font-weight: 500;
}

.foot-btn.save svg {
  width: 21px;
  height: 21px;
}

.grip {
  position: absolute;
  right: 1px;
  bottom: 1px;
  width: 0;
  height: 0;
  border-style: solid;
  border-width: 0 0 12px 12px;
  border-color: transparent transparent #dde0e6 transparent;
}

/* windows taskbar */
.taskbar {
  height: 59px;
  flex: none;
  display: flex;
  border-top: 1px solid #b4bab8;
  background: linear-gradient(90deg, #d6e6c0 0%, #d8e7c2 32%, #c3e6e0 46%, #cfe3ea 60%, #cfe5ee 100%);
}

.weather {
  position: relative;
  width: 235px;
  padding: 15px 0 0 26px;
  flex: none;
}

.badge {
  position: absolute;
  color: #fff;
  text-align: center;
}

.red-round {
  left: 40px;
  top: 8px;
  width: 20px;
  height: 20px;
  border-radius: 50%;
  background: #c42b1c;
  font-size: 13px;
  line-height: 20px;
}

.apps {
  display: flex;
}

.app-icon {
  position: relative;
  width: 55.090px;
  height: 58px;
  display: flex;
  align-items: center;
  justify-content: center;
  padding-bottom: 1px;
}

.app-icon > svg {
  width: 30px;
  height: 30px;
}

.running::after {
  content: "";
  position: absolute;
  left: 24px;
  bottom: 5px;
  width: 7px;
  height: 4px;
  border-radius: 2px;
  background: #70777c;
}

.open::before {
  content: "";
  position: absolute;
  left: 3px;
  top: 5px;
  width: 48px;
  height: 48px;
  border-radius: 5px;
  background: rgba(255, 255, 255, .55);
}

.open.running::after {
  left: 18px;
  width: 20px;
  background: #0078d4;
}

.app-icon > svg.pg-big {
  position: relative;
  width: 28px;
  height: 32px;
}

.red-square {
  right: 7px;
  top: 10px;
  width: 19px;
  height: 19px;
  border-radius: 4px;
  background: #ef3b3b;
  font-size: 14px;
  line-height: 19px;
}

.avatar {
  position: absolute;
  right: 8px;
  top: 8px;
  width: 21px;
  height: 22px;
  border-radius: 50%;
}

.avatar.dark {
  background: radial-gradient(circle at 50% 35%, #5a6a6a 0 25%, #1c2a33 60%);
}

.avatar.light {
  background: radial-gradient(circle at 50% 35%, #7d6a58 0 30%, #9aa3a8 60%);
}

.shade {
  position: absolute;
  right: 10px;
  top: 14px;
  width: 16px;
  height: 14px;
  background: rgba(220, 225, 225, .7);
}

.svg-ab {
  font-family: Roboto, sans-serif;
  font-size: 13px;
  font-weight: 500;
  fill: #ee7777;
}

.svg-zoom {
  font-family: Roboto, sans-serif;
  font-size: 8px;
  fill: #fff;
  text-anchor: middle;
}

.svg-t {
  font-family: Roboto, sans-serif;
  font-size: 12px;
  font-weight: 700;
  fill: #4b53bc;
  text-anchor: middle;
}
```
